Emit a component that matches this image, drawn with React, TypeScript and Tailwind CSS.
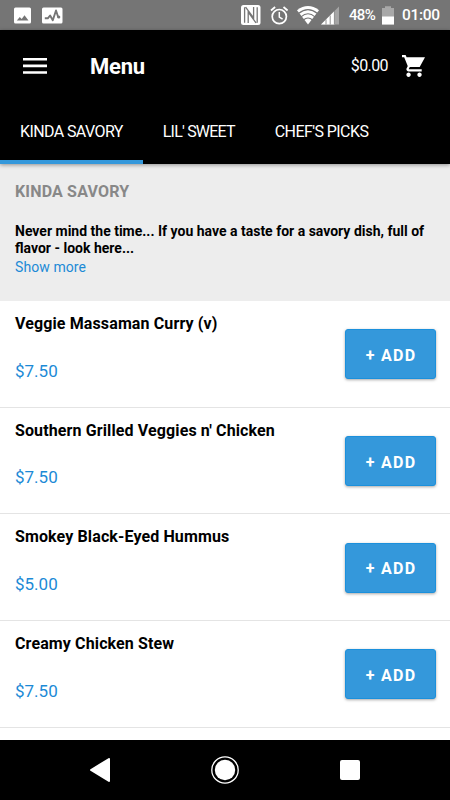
const TABS = [
    { label: 'KINDA SAVORY', spacing: 'tracking-[-0.6px]' },
    { label: "LIL' SWEET", spacing: 'tracking-[-0.8px]' },
    { label: "CHEF'S PICKS", spacing: 'tracking-[-0.57px]' },
];

const DISHES = [
    { name: 'Veggie Massaman Curry (v)', price: '$7.50' },
    { name: "Southern Grilled Veggies n' Chicken", price: '$7.50' },
    { name: 'Smokey Black-Eyed Hummus', price: '$5.00' },
    { name: 'Creamy Chicken Stew', price: '$7.50' },
];

function StatusBar() {
    return (
        <div className="flex h-[30px] shrink-0 items-center bg-[#757575] pl-[14px] text-white">
            {/* Notifications */}
            <svg className="h-[17px] w-[17px]" viewBox="0 0 17 17">
                <rect y=".5" width="17" height="16" rx="1.5" fill="#fff" />
                <path d="M2.8 13.5l3-3.6 1.9 2L10.5 8.3l4 5.2z" fill="#757575" />
            </svg>
            <svg className="ml-[11px] h-[17px] w-[21px]" viewBox="0 0 21 17">
                <rect y=".5" width="20.5" height="16" rx="1.5" fill="#fff" />
                <path
                    d="M2.8 11.3h3l2.3-2.8 2.7 4.7L14 3.5l2.4 7.2"
                    fill="none"
                    stroke="#757575"
                    strokeWidth="1.9"
                    strokeLinejoin="round"
                />
                <circle cx="16.8" cy="10" r="1.5" fill="#757575" />
            </svg>

            {/* NFC */}
            <svg className="ml-[178px] h-5 w-5" viewBox="0 0 20 20">
                <rect width="19.5" height="20" rx="2.5" fill="#fff" />
                <path
                    d="M3.6 2.2v15.6M7.2 18V7.2L15 17.8M4.6 2.2L12.6 13V2M16.2 2.2v15.6"
                    fill="none"
                    stroke="#757575"
                    strokeWidth="1.3"
                />
            </svg>

            {/* Alarm */}
            <svg className="ml-[9px] h-[19px] w-[19px]" viewBox="0 0 19 19" fill="none" stroke="#fff">
                <circle cx="9.3" cy="10.6" r="7.1" strokeWidth="1.7" />
                <path d="M9.3 6v5l3.3 2.2" strokeWidth="1.5" />
                <path d="M1 4.5L5.1 1M17.6 4.5L13.5 1" strokeWidth="1.8" />
            </svg>

            {/* Wifi */}
            <svg className="ml-2 h-[19px] w-[22px]" viewBox="0 0 22 19">
                <path d="M0 4.2Q11-4 22 4.2L11 18.5z" fill="#fff" />
                <path
                    d="M1.5 7.5Q11-.2 20.5 7.5M4 10.8Q11 4.8 18 10.8M6.4 14Q11 10 15.6 14"
                    fill="none"
                    stroke="#757575"
                    strokeWidth="1.1"
                />
            </svg>

            {/* Signal */}
            <svg className="ml-[2px] h-[19px] w-[18px]" viewBox="0 0 18 19">
                <path d="M0 18.5L18 .5v18z" fill="#a5a5a5" />
                <path d="M0 18.5L13.5 5v13.5z" fill="#fff" />
                <path d="M5 13.5v5M9.2 9.5v9M13.4 5v13.5" stroke="#858585" strokeWidth=".9" />
            </svg>

            <span className="ml-[10px] w-[33px] pt-px text-[15px] font-medium tracking-[-0.7px] whitespace-nowrap">
                48%
            </span>

            {/* Battery */}
            <svg className="h-[19px] w-[12px]" viewBox="0 0 12 19">
                <path d="M0 2h3V.3h6V2h3v16.5H0z" fill="#a8a8a8" />
                <path d="M0 10.5h12v8H0z" fill="#fff" />
            </svg>
            <span className="ml-[8px] pt-px text-[15.5px] font-medium tracking-[-0.3px]">01:00</span>
        </div>
    );
}

function Header() {
    return (
        <header className="z-10 flex h-[134px] shrink-0 flex-col bg-black text-white shadow-[0_1px_4px_rgba(0,0,0,0.4)]">
            <div className="flex h-[72px] items-center pr-[25px] pl-[23px]">
                <svg className="h-4 w-6" viewBox="0 0 24 16">
                    <path d="M0 0h24v2.6H0zM0 6.6h24v2.6H0zM0 13.2h24v2.6H0z" fill="#fff" />
                </svg>
                <h1 className="ml-[43px] flex-1 text-[22px] font-bold tracking-[-0.2px]">Menu</h1>
                <span className="text-[16px] tracking-[-0.6px]">$0.00</span>
                <svg className="ml-[14px] h-[22px] w-[23px]" viewBox="1 2 21 20" preserveAspectRatio="none" fill="#fff">
                    <path d="M1 2h3.27l.94 2H22l-4.85 8.97H6.6L3 4H1z" />
                    <path d="M7 18c-1.1 0-1.99.9-1.99 2S5.9 22 7 22s2-.9 2-2-.9-2-2-2zM6.6 11.59l-1.35 2.45c-.16.28-.25.61-.25.96 0 1.1.9 2 2 2h12v-2H7.42c-.14 0-.25-.11-.25-.25L8.1 13zM17 18c-1.1 0-1.99.9-1.99 2s.89 2 1.99 2 2-.9 2-2-.9-2-2-2z" />
                </svg>
            </div>
            <nav className="flex h-[62px] text-[16px]">
                {TABS.map((tab, i) => (
                    <button
                        key={tab.label}
                        className={`border-b-4 px-5 pt-[2px] whitespace-nowrap ${tab.spacing} ${
                            i === 0 ? 'border-[#3498db]' : 'border-transparent'
                        }`}
                    >
                        {tab.label}
                    </button>
                ))}
            </nav>
        </header>
    );
}

function DishRow({ name, price }: { name: string; price: string }) {
    return (
        <li className="flex h-[106.67px] items-start justify-between border-b border-[#e4e4e4] pr-[14px] pl-[15px]">
            <div className="pt-[11px]">
                <h3 className="text-[16px] leading-6 font-bold tracking-[0.12px] text-black">{name}</h3>
                <p className="mt-[22.6px] text-[17px] leading-6 text-[#1c8ad6]">{price}</p>
            </div>
            <button className="mt-[28.4px] h-[50px] w-[91px] rounded-[3px] border border-[#1b90dc] bg-[#3498db] pt-[3px] pl-px text-[16px] font-bold tracking-[1.3px] text-white shadow-[0_1px_3px_rgba(0,0,0,0.35)]">
                + ADD
            </button>
        </li>
    );
}

function NavigationBar() {
    return (
        <div className="z-10 flex h-[60px] shrink-0 items-center justify-between bg-black px-[90px]">
            <svg className="h-6 w-5" viewBox="0 0 20 24">
                <path d="M19 1v22L1 12z" fill="#fff" stroke="#fff" strokeWidth="2" strokeLinejoin="round" />
            </svg>
            <svg className="h-7 w-7" viewBox="0 0 28 28">
                <circle cx="14" cy="14" r="13.2" fill="none" stroke="#fff" strokeWidth="1.3" />
                <circle cx="14" cy="14" r="10.2" fill="#fff" />
            </svg>
            <div className="h-5 w-5 rounded-[2px] bg-white" />
        </div>
    );
}

export default function App() {
    return (
        <div className="flex h-[800px] w-[450px] flex-col overflow-hidden bg-white font-['Roboto',sans-serif]">
            <StatusBar />
            <Header />
            <main className="min-h-0 flex-1 overflow-hidden">
                <section className="h-[137px] bg-[#ededed] px-[15px] pt-[18px]">
                    <h2 className="text-[16px] leading-5 font-bold tracking-[0.17px] text-[#888]">KINDA SAVORY</h2>
                    <p className="mt-[21px] text-[14px] leading-[17px] font-bold text-black">
                        Never mind the time... If you have a taste for a savory dish, full of
                        <br />
                        flavor - look here...
                    </p>
                    <button className="block text-[14px] leading-5 tracking-[0.08px] text-[#1c8ad6]">Show more</button>
                </section>
                <ul>
                    {DISHES.map((dish) => (
                        <DishRow key={dish.name} name={dish.name} price={dish.price} />
                    ))}
                </ul>
            </main>
            <NavigationBar />
        </div>
    );
}
